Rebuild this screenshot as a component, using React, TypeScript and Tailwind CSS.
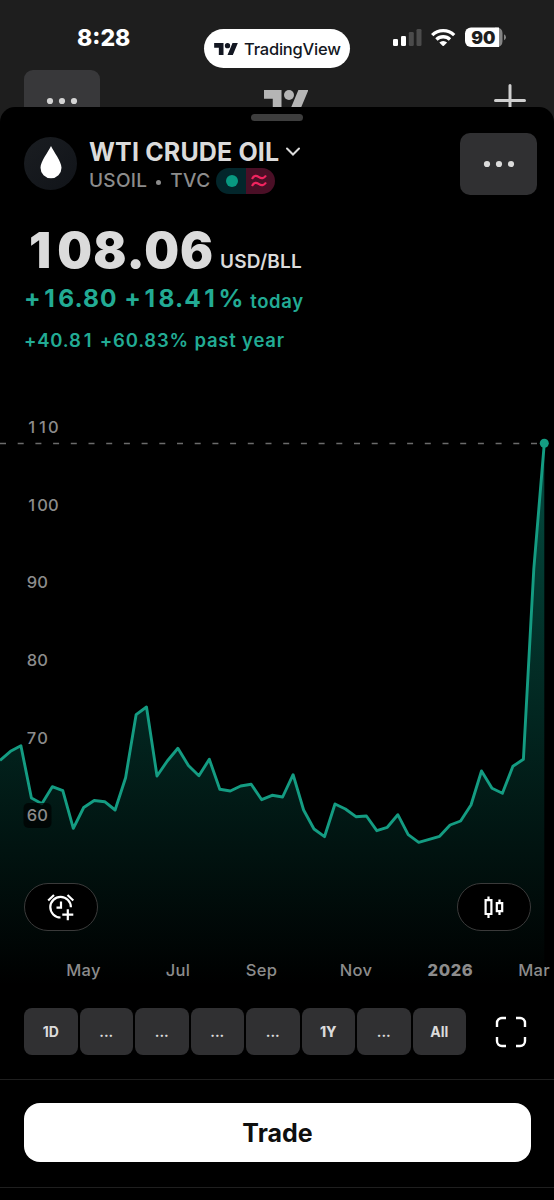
import type { ReactNode } from 'react';
import clsx from 'clsx';

const PERIODS = ['1D', '...', '...', '...', '...', '1Y', '...', 'All'];

const PRICE_LABELS = [
  { label: '110', y: 427 },
  { label: '100', y: 504.5 },
  { label: '90', y: 582 },
  { label: '80', y: 660 },
  { label: '70', y: 737.5 },
  { label: '60', y: 815 },
];

const MONTHS = [
  { label: 'May', x: 83.5 },
  { label: 'Jul', x: 178 },
  { label: 'Sep', x: 261.5 },
  { label: 'Nov', x: 356 },
  { label: '2026', x: 450.5, strong: true },
  { label: 'Mar', x: 534 },
];

// weekly closes, evenly spaced along the x axis
const CLOSES = [
  760.5, 751.3, 745.7, 798, 803.7, 786.7, 790.7, 828.3, 807.5, 800.5, 801.7, 810, 777.7, 714.7,
  707, 776, 760.7, 748.3, 765.5, 775.7, 759.3, 789.3, 791, 786, 784.3, 799.7, 795.3, 797, 774.7,
  810, 829, 836.7, 804, 809, 816.7, 816, 830.7, 827.3, 814.7, 834.7, 842.3, 839.3, 836.3, 825,
  821, 805, 771, 788.3, 793.3, 766.3, 759.3, 569, 443.3,
];

const STEP = 544.3 / (CLOSES.length - 1);
const LINE = CLOSES.map((y, i) => `${(i * STEP).toFixed(1)},${y}`).join(' ');

// x of every digit of an axis label, so the digits share one column width
const digitXs = (label: string) =>
  [...label].map((c, i) => 26.7 + i * 10.6 + (c === '1' ? 1.6 : 0)).join(' ');

// gives "1" the width of the other digits without the footed tabular glyph
function Digits({ value }: { value: string }) {
  return value.split(/(1)/).map((part, i) =>
    part === '1' ? (
      <span key={i} className="inline-block w-[0.68em] text-center">
        1
      </span>
    ) : (
      part
    ),
  );
}

function TradingViewLogo({ className }: { className?: string }) {
  return (
    <svg viewBox="0 4 35.5 18" className={className} fill="currentColor">
      <path d="M14 22H7V11H0V4h14v18zM28 22h-8l7.5-18h8L28 22z" />
      <circle cx="20" cy="8" r="4" />
    </svg>
  );
}

function Dots({ className }: { className?: string }) {
  return (
    <svg width="32" height="8" viewBox="0 0 32 8" fill="currentColor" className={className}>
      <circle cx="4" cy="4" r="3.1" />
      <circle cx="16" cy="4" r="3.1" />
      <circle cx="28" cy="4" r="3.1" />
    </svg>
  );
}

function StatusBar() {
  return (
    <div className="flex h-[70px] items-start">
      <div className="w-[204px] pt-[24px] pl-[77px] text-[23px] leading-[28px] font-extrabold text-white">
        8:28
      </div>
      <div className="mt-[29px] flex h-[39px] w-[146px] items-center rounded-full bg-white pl-[10px] text-[#131722]">
        <TradingViewLogo className="h-[12px] w-[24px]" />
        <span className="mt-px ml-[6px] text-[16.5px] font-medium tracking-[-0.2px]">TradingView</span>
      </div>
      <svg width="120" height="24" viewBox="0 0 120 24" className="mt-[26px] ml-[43px]">
        <rect x="0" y="13" width="5" height="7" rx="1.3" fill="#fff" />
        <rect x="8" y="10" width="5" height="10" rx="1.3" fill="#fff" />
        <rect x="15.8" y="6" width="5" height="14" rx="1.3" fill="#4b4b4b" />
        <rect x="23.5" y="3" width="5" height="17" rx="1.3" fill="#4b4b4b" />
        <g fill="none" stroke="#fff" strokeWidth="3.3">
          <path d="M39.2 9.1a15.6 15.6 0 0 1 22 0" />
          <path d="M43.4 13.5a9.8 9.8 0 0 1 13.6 0" />
        </g>
        <path d="M46.3 16.5a5.6 5.6 0 0 1 7.8 0l-3.2 3.2a1 1 0 0 1-1.4 0z" fill="#fff" />
        <path d="M79 1.5h25a5.5 5.5 0 0 1 5.5 5.5v8.5a5.5 5.5 0 0 1-5.5 5.5h-2v-19.5z" fill="#858585" />
        <path d="M78 1.5h28v19.5H78a6 6 0 0 1-6-6V7.5a6 6 0 0 1 6-6z" fill="#fff" />
        <path d="M111 8.3q2 1 2 3t-2 3z" fill="#858585" />
        <text x="90.3" y="17.6" textAnchor="middle" className="text-[17.5px] font-black" fill="#1e1e1e">
          90
        </text>
      </svg>
    </div>
  );
}

// top of the screen that stays visible behind the sheet
function BackdropHeader() {
  return (
    <div className="flex h-[37px] items-start overflow-hidden pl-[24px]">
      <div className="flex h-[62px] w-[76px] shrink-0 justify-center rounded-[9px] bg-[#38383a] pt-[27px] text-[#d4d4d4]">
        <Dots />
      </div>
      <TradingViewLogo className="mt-[20px] ml-[164px] h-[22.5px] w-[44.4px] shrink-0 text-[#b5b5b5]" />
      <svg width="32" height="32" viewBox="0 0 32 32" className="mt-[14px] ml-[185.6px] shrink-0">
        <path d="M16 1.5v29M1.5 16.5h29" stroke="#d0d0d0" strokeWidth="3" strokeLinecap="round" />
      </svg>
    </div>
  );
}

function SymbolHeader() {
  return (
    <div className="flex h-[74px] items-start px-[24px]">
      <div className="mt-[4px] flex size-[53px] items-center justify-center rounded-full bg-linear-to-br from-[#1a1d21] to-[#111419]">
        <svg width="22" height="34" viewBox="0 0 22 34" fill="#fff" className="-mt-[3px]">
          <path d="M11 1C8.5 6.5.5 16.5.5 22.8a10.5 10.5 0 0 0 21 0C21.5 16.5 13.5 6.5 11 1z" />
        </svg>
      </div>
      <div className="ml-[12px] flex flex-1 flex-col">
        <div className="mt-[3px] flex h-[32px] items-center whitespace-nowrap">
          <h1 className="text-[25px] leading-[32px] font-bold tracking-[0.15px] text-[#dbdbdb]">
            WTI CRUDE OIL
          </h1>
          <svg width="16" height="10" viewBox="0 0 16 10" fill="none" className="ml-[6px]">
            <path d="M2 1.5 8 7.5l6-6" stroke="#dbdbdb" strokeWidth="2" strokeLinecap="round" />
          </svg>
        </div>
        <div className="flex h-[26px] items-center text-[19px] font-medium whitespace-nowrap text-[#8c8c8c]">
          <span className="tracking-[0.3px]">USOIL</span>
          <span className="mx-[9px] mt-[2px] size-[5px] rounded-full bg-[#8c8c8c]" />
          <span className="tracking-[0.3px]">TVC</span>
          <div className="ml-[6px] flex h-[26px] w-[59px] overflow-hidden rounded-full">
            <div className="flex w-[30px] items-center justify-center bg-[#03262b] pl-[2px]">
              <span className="size-[12px] rounded-full bg-[#089981]" />
            </div>
            <div className="flex w-[29px] items-center justify-center bg-[#4a0f26] pr-[3px]">
              <svg width="16" height="14" viewBox="0 0 16 14" fill="none" stroke="#f0245f" strokeWidth="2.2">
                <path d="M1 5C3 1 5.5 1.5 8 3.2S13 4.5 15 1.5M1 12C3 8 5.5 8.5 8 10.2S13 11.5 15 8.5" />
              </svg>
            </div>
          </div>
        </div>
      </div>
      <button className="-mr-[7px] flex h-[62px] w-[77px] items-center justify-center rounded-[10px] bg-[#303032] text-[#dbdbdb]">
        <Dots />
      </button>
    </div>
  );
}

function Quote() {
  return (
    <div className="flex h-[163px] flex-col pl-[24px] font-semibold whitespace-nowrap text-[#22ab94]">
      <div className="mt-[18px] flex h-[52px] items-baseline text-[#dbdbdb]">
        <span className="text-[49px] leading-[52px] font-black tracking-[1px]">
          <Digits value="108.06" />
        </span>
        <span className="ml-[6px] text-[19px] font-semibold tracking-[0.2px]">USD/BLL</span>
      </div>
      <div className="mt-[5px] flex h-[32px] items-baseline">
        <span className="text-[24.5px] leading-[32px] font-bold tracking-[1px]">
          <Digits value="+16.80 +18.41%" />
        </span>
        <span className="relative top-px ml-[6px] text-[18.5px] tracking-[0.6px]">today</span>
      </div>
      <div className="mt-[12px] text-[18.5px] leading-[28px] tracking-[0.8px]">
        <Digits value="+40.81 +60.83% past year" />
      </div>
    </div>
  );
}

function RoundButton({ children }: { children: ReactNode }) {
  return (
    <button className="flex h-[48px] w-[74px] items-center justify-center rounded-full border border-[#3a3a3a] bg-black">
      {children}
    </button>
  );
}

function PriceChart() {
  return (
    <div className="relative h-[624px]">
      <svg width="554" height="624" viewBox="0 370 554 624" className="block">
        <defs>
          <linearGradient id="area" gradientUnits="userSpaceOnUse" x1="0" y1="443" x2="0" y2="985">
            <stop offset="0" stopColor="#089981" stopOpacity="0.5" />
            <stop offset="1" stopColor="#089981" stopOpacity="0" />
          </linearGradient>
        </defs>
        <path d="M0 443.5H544" stroke="#6b6b6b" strokeWidth="1.3" strokeDasharray="6 11.7" />
        <polygon points={`0,994 ${LINE} 544.3,994`} fill="url(#area)" />
        <polyline points={LINE} fill="none" stroke="#149c82" strokeWidth="2.9" strokeLinejoin="round" />
        <circle cx="544.3" cy="443.3" r="4.5" fill="#149c82" />
        <rect x="23.5" y="803" width="28" height="25" rx="5" fill="#000" fillOpacity="0.7" />
        <g className="text-[16.5px] font-medium tracking-[0.3px]" fill="#8c8c8c">
          {PRICE_LABELS.map(({ label, y }) => (
            <text key={label} x={digitXs(label)} y={y + 6}>
              {label}
            </text>
          ))}
          {MONTHS.map(({ label, x, strong }) => (
            <text
              key={label}
              x={x}
              y="975.5"
              textAnchor="middle"
              className={clsx(strong && 'font-extrabold tracking-[0.6px]')}
            >
              {label}
            </text>
          ))}
        </g>
      </svg>
      <div className="absolute inset-x-[23.5px] top-[513px] flex justify-between">
        <RoundButton>
          <svg width="28" height="28" viewBox="0 0 28 28" fill="none" stroke="#fff" strokeWidth="2.2">
            <path d="M13.5 24.5a10.3 10.3 0 1 1 10.4-10.2" />
            <path d="M14 8.5v6.2H9.5M1.2 7.5 7 2M20.5 2l5.8 5.5M20.8 16.2v11M15.3 21.7h11" />
          </svg>
        </RoundButton>
        <RoundButton>
          <svg width="22" height="24" viewBox="0 0 22 24" fill="none" stroke="#fff" strokeWidth="2.2">
            <path d="M2.6 5.2h5.8v13.8H2.6zM5.5 1.5v3.5M5.5 19v4M13.8 8.2h5.4v8h-5.4zM16.5 4.5v3.5M16.5 16.5v3.5" />
          </svg>
        </RoundButton>
      </div>
    </div>
  );
}

function PeriodBar() {
  return (
    <div className="flex h-[85px] items-start pt-[14px] pl-[24px]">
      <div className="flex w-[442px] gap-[2px]">
        {PERIODS.map((period, i) => (
          <button
            key={i}
            className={clsx(
              'h-[47px] flex-1 rounded-[8px] bg-[#303032] text-[14px] text-[#dbdbdb]',
              period === '1Y' ? 'font-extrabold' : 'font-bold',
            )}
          >
            {period}
          </button>
        ))}
      </div>
      <svg width="32" height="32" viewBox="0 0 32 32" fill="none" className="mt-[7.5px] ml-[28.5px]">
        <path
          d="M2 11V7a5 5 0 0 1 5-5h4M21 2h4a5 5 0 0 1 5 5v4M30 21v4a5 5 0 0 1-5 5h-4M11 30H7a5 5 0 0 1-5-5v-4"
          stroke="#fff"
          strokeWidth="2.4"
        />
      </svg>
    </div>
  );
}

export default function App() {
  return (
    <div className="h-[1200px] w-[554px] overflow-hidden bg-[#1e1e1e] font-['Inter',sans-serif]">
      <StatusBar />
      <BackdropHeader />
      <main className="h-[1093px] rounded-t-[15px] bg-black">
        <div className="flex h-[26px] justify-center pt-[7px]">
          <div className="h-[7px] w-[52px] rounded-full bg-[#3d3d3d]" />
        </div>
        <SymbolHeader />
        <Quote />
        <PriceChart />
        <PeriodBar />
        <div className="h-[109px] border-y border-[#1f1f1f] px-[24px] pt-[23px]">
          <button className="h-[59px] w-[507px] rounded-[16px] bg-white pt-[2px] text-[25px] font-bold text-[#0f0f0f]">
            Trade
          </button>
        </div>
      </main>
    </div>
  );
}
